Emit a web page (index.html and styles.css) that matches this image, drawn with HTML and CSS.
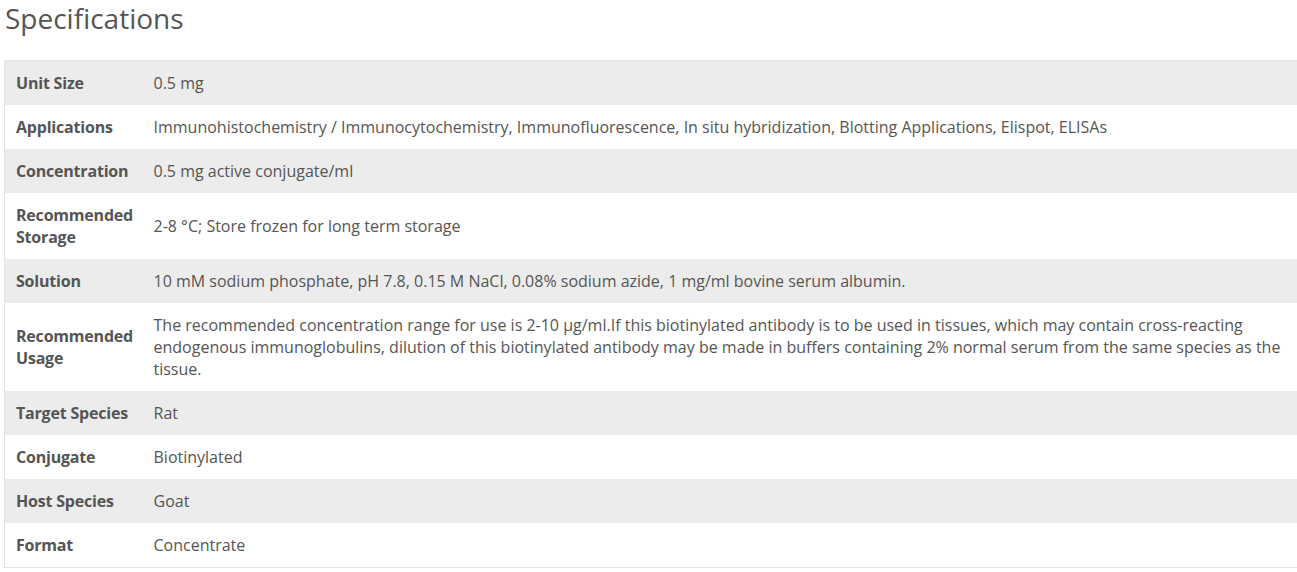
FILE: index.html
```html
<!DOCTYPE html>
<html>
<head>
<meta charset="utf-8">
<link rel="stylesheet" href="styles.css">
</head>
<body>
<div class="page">
  <h2 class="title">Specifications</h2>
  <table class="specs">
    <colgroup><col class="c-label"><col></colgroup>
    <tbody>
      <tr><th>Unit Size</th><td>0.5 mg</td></tr>
      <tr><th>Applications</th><td>Immunohistochemistry / Immunocytochemistry, Immunofluorescence, In situ hybridization, Blotting Applications, Elispot, ELISAs</td></tr>
      <tr><th>Concentration</th><td>0.5 mg active conjugate/ml</td></tr>
      <tr><th>Recommended Storage</th><td>2-8 °C; Store frozen for long term storage</td></tr>
      <tr><th>Solution</th><td>10 mM sodium phosphate, pH 7.8, 0.15 M NaCl, 0.08% sodium azide, 1 mg/ml bovine serum albumin.</td></tr>
      <tr><th>Recommended Usage</th><td>The recommended concentration range for use is 2-10 µg/ml.If this biotinylated antibody is to be used in tissues, which may contain cross-reacting endogenous immunoglobulins, dilution of this biotinylated antibody may be made in buffers containing 2% normal serum from the same species as the tissue.</td></tr>
      <tr><th>Target Species</th><td>Rat</td></tr>
      <tr><th>Conjugate</th><td>Biotinylated</td></tr>
      <tr><th>Host Species</th><td>Goat</td></tr>
      <tr><th>Format</th><td>Concentrate</td></tr>
    </tbody>
  </table>
</div>
</body>
</html>
```
FILE: styles.css
```css
html, body {
  margin: 0;
  padding: 0;
  background: #fff;
  overflow: hidden;
}
.page {
  padding-left: 4px;
  font-family: "Open Sans", sans-serif;
  color: #555;
}
.title {
  margin: 0;
  height: 60px;
  font-size: 28px;
  font-weight: 400;
  line-height: 36px;
  color: #555;
  padding-left: 1px;
}
.specs {
  width: 1300px;
  table-layout: fixed;
  border-collapse: collapse;
  border: 1px solid #e4e4e4;
  font-size: 16px;
  line-height: 22px;
}
.c-label {
  width: 137px;
}
.specs th, .specs td {
  padding: 11px 12px;
  vertical-align: middle;
  text-align: left;
}
.specs th {
  padding-left: 11px;
  padding-right: 6px;
  font-weight: 700;
  letter-spacing: -0.2px;
  color: #555;
}
.specs td {
  color: #555;
}
.specs tr:nth-child(odd) {
  background: #ececec;
}
```
